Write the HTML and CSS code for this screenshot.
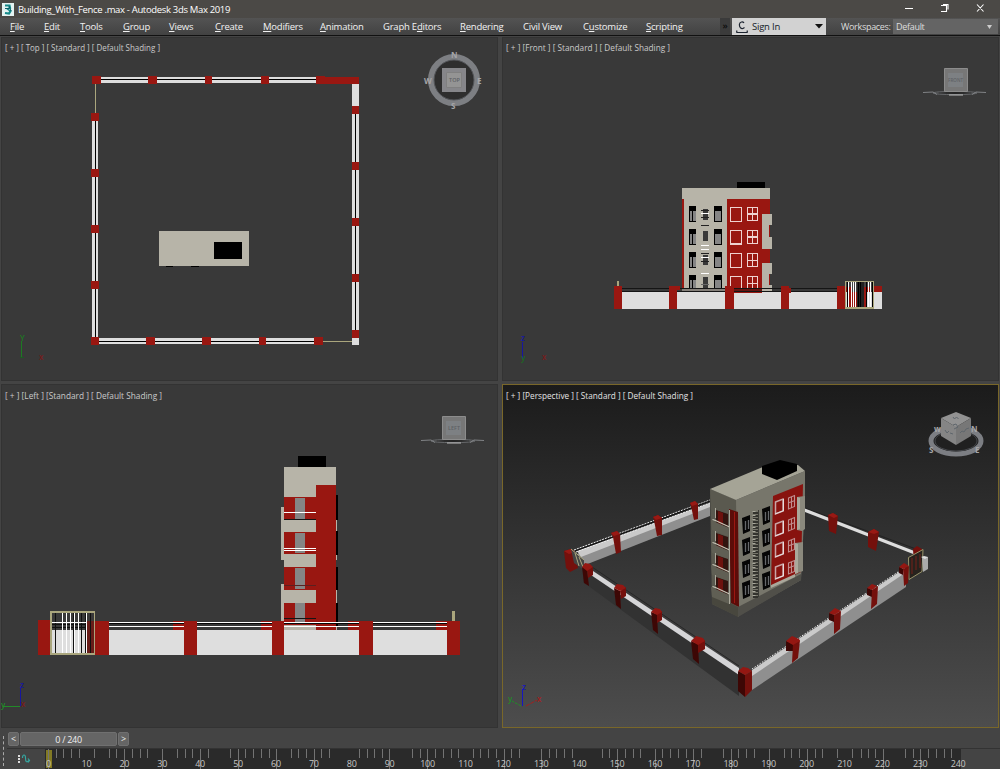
FILE: index.html
```html
<!DOCTYPE html>
<html lang="en">
<head>
<meta charset="utf-8">
<title>Building_With_Fence .max - Autodesk 3ds Max 2019</title>
<link rel="stylesheet" href="styles.css">
</head>
<body>
<div class="app">
  <header class="titlebar">
    <svg class="logo" width="12" height="13" viewBox="0 0 12 13"><path fill="#e4f3f2" d="M0 0h12v13H0z"/><path d="M3 2.500L7.500 2.500 8 5 6 6 8.500 8 7 10.500 3 10" fill="none" stroke="#158a8a" stroke-width="2.200"/><path d="M3 5.500h4M7 3l2 5" stroke="#0a5f68"/></svg>
    <span class="title">Building_With_Fence .max - Autodesk 3ds Max 2019</span>
    <svg class="window-buttons" width="100" height="18" viewBox="900 0 100 18"><path d="M905 8.500h8M941 5.500h5.500v6H941M943 4.500h5v5M977 4.500l6.500 7M983.500 4.500L977 11.500" fill="none" stroke="#fff" stroke-width="1.100"/></svg>
  </header>
  <nav class="menubar">
    <span class="item file"><u>F</u>ile</span><span class="item edit"><u>E</u>dit</span><span class="item tools"><u>T</u>ools</span><span class="item group"><u>G</u>roup</span><span class="item views"><u>V</u>iews</span><span class="item create"><u>C</u>reate</span><span class="item modifiers"><u>M</u>odifiers</span><span class="item animation"><u>A</u>nimation</span><span class="item graph">Graph E<u>d</u>itors</span><span class="item rendering"><u>R</u>endering</span><span class="item civil">Civil View</span><span class="item customize">C<u>u</u>stomize</span><span class="item scripting"><u>S</u>cripting</span>
    <span class="more">»</span>
    <div class="signin">
      <svg width="12" height="14" viewBox="0 0 12 14"><path d="M8 3C7 1.500 4 1.500 3.500 4c-.5 3 1.500 5 3.500 4.500L8.500 7.500M.5 12.500h11M.5 12.500L1 10.500M11.500 12.500L11 10.500" fill="none" stroke="#1d2430" stroke-width="1.200"/></svg>
      <span>Sign In</span>
      <svg class="caret" width="8" height="5" viewBox="0 0 8 5"><path d="M0 0h8L4 4.500z" fill="#111"/></svg>
    </div>
    <span class="ws-label">Workspaces:</span>
    <div class="ws-select"><span>Default</span><svg width="5" height="4" viewBox="0 0 5 4"><path d="M0 0h5L2.500 4z" fill="#ccc"/></svg></div>
  </nav>

  <main class="viewports">
    <section class="viewport">
      <svg class="scene" viewBox="1 37 497 344" width="497" height="344">
        <g shape-rendering="crispEdges">
          <path fill="#dedede" d="M98 77h220v6H98zM352 84h7v261h-7zM92 117h6v226h-6zM96 338h224v6H96z"/>
          <path fill="#000" d="M98 79h220v1H98zM355 110h1v225h-1zM95 117h1v224h-1zM96 341h222v1H96z"/>
          <path fill="#aaa67d" d="M95 84h1v29h-1zM323 341h29v1h-29z"/>
          <path fill="#991711" d="M92 76h9v8h-9zM148 76h9v8h-9zM205 76h7v8h-7zM261 76h8v8h-8zM316 76h9v8h-9zM325 77h34v7h-34zM352 106h7v8h-7zM352 162h7v8h-7zM352 218h7v8h-7zM352 274h7v8h-7zM352 330h7v8h-7zM91 113h8v8h-8zM91 169h8v8h-8zM91 225h8v8h-8zM91 281h8v8h-8zM91 337h8v8h-8zM146 337h9v8h-9zM202 337h9v8h-9zM259 337h7v8h-7zM314 337h9v8h-9z"/>
          <path fill="#b7b4a8" d="M159 231h90v35h-90z"/>
          <path fill="#000" d="M214 242h28v17h-28zM166 266h7v1h-7zM191 266h8v1h-8z"/>
        </g>
        <text class="vlabel" x="5" y="51" textLength="155" lengthAdjust="spacingAndGlyphs">[ + ] [ Top ] [ Standard ] [ Default Shading ]</text>
        <circle cx="454" cy="80" r="23" fill="#2e2e2e" stroke="#7d7f83" stroke-width="6"/>
        <circle cx="454" cy="80" r="20" fill="none" stroke="#55575b"/>
        <path fill="#86868a" d="M442 68h24v24h-24z"/><path fill="#949494" stroke="#808080" d="M446.500 72.500h15v15h-15z"/>
        <text class="cube" x="449" y="82" textLength="11">TOP</text>
        <g class="compass"><text x="451" y="58">N</text><text x="424" y="84">W</text><text x="477" y="84">E</text><text x="451" y="109">S</text></g>
        <path d="M21.500 358v-17" stroke="#1c7a22"/><text x="20" y="341" class="axis" fill="#1c7a22">Y</text><path d="M20 357.500h4" stroke="#1c5a22"/><text x="39" y="360" class="axis" fill="#7a1c1c">x</text>
      </svg>
    </section>

    <section class="viewport">
      <svg class="scene" viewBox="502 37 497 344" width="497" height="344">
        <g shape-rendering="crispEdges">
          <path fill="#000" d="M737 182h28v6h-28z"/>
          <path fill="#b7b4a8" d="M682 188h88v11h-88zM684 199h43v93h-43z"/>
          <path fill="#991711" d="M682 199h2v92h-2zM727 199h43v94h-43z"/>
          <path fill="#b7b4a8" d="M762 214h10v11h-3v12h3v12h-10zM762 263h10v11h-3v11h3v8h-10z"/>
          <g id="floor">
            <path fill="#000" d="M689 206h7v16h-7zM714 206h8v16h-8z"/>
            <path fill="#858585" d="M690 211h2v10h-2zM693 211h3v10h-3zM715 211h6v10h-6z"/>
            <path fill="none" stroke="#efd2d0" d="M730.500 207.500h11v14h-11zM747.500 207.500h10v13h-10zM752.500 207v14M747 214.500h11"/>
          </g>
          <use href="#floor" y="23"/><use href="#floor" y="46"/><use href="#floor" y="69"/>
          <path stroke="#efd2d0" d="M747 213.500h11M747 236.500h11M730 243.500h12"/>
          <path fill="#393939" d="M703 209h5v11h-5zM703 231h5v10h-5zM703 255h5v10h-5zM703 277h5v11h-5z"/>
          <path stroke="#222" d="M701 210.500h8M701 217.500h8M701 225.500h8M701 253.500h8M701 261.500h8"/>
          <path stroke="#fff" d="M701 213.500h8M701 245.500h8M701 249.500h8M701 257.500h8M701 273.500h8"/>
          <path stroke="#666" d="M701 284.500h8"/>
          <path fill="#393939" d="M622 289h57v2h-57zM772 289h65v2h-65z"/>
          <path fill="#85807a" d="M682 289h43v2h-43z"/><path fill="#641510" d="M734 289h28v2h-28z"/>
          <path fill="#dedede" d="M622 292h260v17H622z"/>
          <path stroke="#151515" d="M622 288.500h215M622 291.500h215"/>
          <path fill="#991711" d="M614 286h8v23h-8zM669 286h8v23h-8zM677 286h3v4h-3zM725 286h9v23h-9zM781 286h8v23h-8zM789 288h2v5h-2zM837 286h8v23h-8zM874 286h8v6h-8zM734 292h28v1h-28z"/>
          <path fill="#aaa67d" d="M617 281h2v5h-2z"/>
          <path fill="#444" d="M846 282h28v10h-28z"/><path fill="#991711" d="M846 287h5v5h-5zM864 287h7v5h-7zM847 292h20v15h-20z"/><path fill="#222" d="M857 282h7v25h-7z"/>
          <path stroke="#fff" d="M848.500 282v25M851.500 282v25M853.500 282v25M855.500 282v25M868.500 282v25M870.500 282v25"/>
          <path stroke="#000" d="M847.500 282v25M858.500 282v25M860.500 282v25M866.500 282v25M872.500 282v25"/>
          <path fill="none" stroke="#aaa67d" d="M845.500 281.500h28v27h-28zM846 307.500h27"/>
        </g>
        <text class="vlabel" x="506" y="51" textLength="164" lengthAdjust="spacingAndGlyphs">[ + ] [Front ] [ Standard ] [ Default Shading ]</text>
        <g id="sidecube"><ellipse cx="955" cy="93" rx="22" ry="1.500" fill="#242424" stroke="#707275"/><path d="M923 92.500l10-.5 4 2.500M986 92.500l-10-.5-4 2.500" fill="none" stroke="#808285"/><path d="M949 95h14" stroke="#bbb"/><path fill="#777" stroke="#8c8c8c" d="M944.500 68.500h23v23h-23z"/><path fill="#7d8083" d="M948 73h15v14h-15z"/></g>
        <text class="cube" x="948" y="82" textLength="15" lengthAdjust="spacingAndGlyphs">FRONT</text>
        <path d="M522.500 359v-17" stroke="#1616a0"/><text x="521" y="341" class="axis" fill="#1616a0">z</text><text x="521" y="361" class="axis" fill="#1c6a22">y</text><text x="542" y="360" class="axis" fill="#7a1c1c">x</text>
      </svg>
    </section>

    <section class="viewport">
      <svg class="scene" viewBox="1 384 497 344" width="497" height="344">
        <g shape-rendering="crispEdges">
          <path fill="#000" d="M298 456h28v11h-28z"/>
          <path fill="#b7b4a8" d="M284 467h52v30h-52zM281 507h3v53h-3zM281 584h3v38h-3zM336 520h1v11h-1zM336 555h1v5h-1zM336 590h1v13h-1zM336 626h1v4h-1z"/>
          <path fill="#991711" d="M316 485h20v145h-20zM284 497h32v128h-32z"/>
          <path fill="#858585" d="M295 498h10v21h-10zM295 533h10v20h-10zM295 568h10v21h-10zM295 603h10v19h-10z"/>
          <path fill="#b7b4a8" d="M284 520h32v12h-32zM284 554h32v13h-32zM284 590h32v13h-32zM284 625h32v5h-32z"/>
          <path stroke="#fff" d="M284 512.500h32M284 548.500h32M284 550.500h32"/>
          <path stroke="#151515" d="M284 519.500h32M284 618.500h32"/><path stroke="#5b2020" d="M284 585.500h32"/>
          <path fill="#000" d="M336 495h2v25h-2zM336 531h2v24h-2zM336 567h2v23h-2zM336 603h2v23h-2z"/>
          <path fill="#dedede" d="M52 630h400v25H52z"/>
          <path fill="#991711" d="M38 620h12v35H38zM95 621h14v34H95zM184 621h13v34h-13zM272 621h12v34h-12zM359 621h14v34h-14zM447 621h13v34h-13zM173 621h11v9h-11zM261 621h11v9h-11zM348 621h11v9h-11zM436 621h11v9h-11z"/>
          <path stroke="#fff" d="M109 622.500h75M197 622.500h75M284 622.500h75M373 622.500h74M109 626.500h75M197 626.500h75M284 626.500h75M373 626.500h74"/>
          <path stroke="#080808" d="M109 623.500h75M197 623.500h75M284 623.500h75M373 623.500h74"/>
          <path fill="#aaa67d" d="M452 611h3v10h-3z"/>
          <path fill="#681d19" d="M87 621h8v33h-8z"/>
          <path stroke="#111" d="M52 624.500h34M52 627.500h34M55.500 613v40M73.500 613v41M81.500 613v40M85.500 613v40M90.500 613v40"/>
          <path stroke="#fff" d="M52 622.500h34M62.500 613v41M66.500 613v41M70.500 613v41M74.500 613v41M78.500 613v41M86.500 613v41"/>
          <path fill="#aaa67d" fill-rule="evenodd" d="M50 611h45v44H50zM52 613v40h42v-40z"/>
        </g>
        <text class="vlabel" x="5" y="399" textLength="157" lengthAdjust="spacingAndGlyphs">[ + ] [Left ] [Standard ] [ Default Shading ]</text>
        <use href="#sidecube" x="-502" y="348"/>
        <text class="cube" x="448" y="430" textLength="12">LEFT</text>
        <path d="M20.500 706v-18" stroke="#1616a0"/><path d="M3 706.500h17" stroke="#228a28"/><text x="20" y="688" class="axis" fill="#1616a0">z</text><text x="1" y="708" class="axis" fill="#228a28">y</text><text x="21" y="707" class="axis" fill="#7a1c1c">x</text>
      </svg>
    </section>

    <section class="viewport active">
      <svg class="scene" viewBox="502 384 497 344" width="497" height="344">
        <!-- rear fence -->
        <path fill="#8f8f8f" d="M577 554l133-50v12l-125 49z"/><path fill="#cacaca" d="M577 551l133-48v4l-129 50z"/>
        <path d="M574 550l136-50M576 552l134-49" stroke="#eee" stroke-dasharray="2 1"/><path d="M575 551l135-50" stroke="#111"/>
        <path d="M802 507l114 42" stroke="#222"/><path d="M803 509.500l112 43.500" stroke="#ddd" stroke-width="3.200"/>
        <!-- rear posts -->
        <path fill="#74100c" d="M611 533l6-2 3 3 1 18-5 2-3-17zM653 517l5-2 4 3v17l-5 1-3-16zM690 503l5-2 3 3v15l-4 1-3-14zM828 515l5-2 5 3-2 18-7-3zM868 532l6-3 5 3-3 19-8-4zM913 549l4-3 5 3-2 20-6-4zM564 551l7-2 4 3 3 16-8 4-4-4z"/>
        <path fill="#991914" d="M611 533l6-2 3 3-6 2zM653 517l5-2 4 3-6 2zM690 503l5-2 3 3-6 2zM828 515l5-2 5 3-4 2zM868 532l6-3 5 3-5 2zM564 551l7-2 4 3-6 2z"/>
        <!-- building -->
        <path fill="#5a594f" d="M710 489l27 11 2 117-27-13z"/><path fill="#77766b" d="M736 500l69-29v29l-4 80-63 36z"/>
        <path fill="#a5a496" d="M710 489l55-23 33-1 7 6-69 29z"/>
        <path fill="#000" d="M762 466l18-6 17 4v7l-20 9-15-6z"/>
        <path fill="#88130f" d="M773 496l30-12-2 88-30 14z"/><path fill="#5c0c09" d="M729 509l9 3 1 95-8-4z"/><path stroke="#9c1711" d="M734.500 512v91"/>
        <path fill="#48473e" d="M712 594l26 13v10l-26-13z"/><path fill="#504f49" d="M738 607l63-33v6l-63 37z"/>
        <g id="balcony"><path fill="#32140f" d="M716 510l12 4v14l-12-5z"/><path fill="#6d120e" d="M718 511l5 2v12l-5-2z"/><path fill="#605f54" d="M711 520l18 8v9l-17-7z"/><path d="M712.500 519.500l3 1 14 6.500" fill="none" stroke="#c8c6b8" stroke-width="1.300"/></g>
        <use href="#balcony" y="23"/><use href="#balcony" y="45"/><use href="#balcony" y="67"/>
        <path d="M729.500 510v94M715.500 508v10M715.500 531v10M715.500 553v10M715.500 575v10" stroke="#aaa89b"/>
        <g id="persp-window"><path fill="#050505" d="M742 518l8-3v16l-7 3z"/><path d="M745.500 521v9M748.500 520v9" stroke="#66686b" stroke-width="1.300"/></g>
        <use href="#persp-window" y="22"/><use href="#persp-window" y="44"/><use href="#persp-window" y="65"/><use href="#persp-window" x="20" y="-9"/><use href="#persp-window" x="20" y="13"/><use href="#persp-window" x="20" y="35"/><use href="#persp-window" x="20" y="56"/>
        <path d="M755.500 512v86" stroke="#33332e" stroke-width="5" stroke-dasharray="2 1"/><path d="M754 511v87" stroke="#aaa99d" stroke-width="3" stroke-dasharray="1 3"/><path d="M758.500 510v87" stroke="#3a3a35"/>
        <g id="persp-red"><path d="M775.500 502l7.500-3v12l-7.500 3z" fill="none" stroke="#c9a5a6" stroke-width="1.500"/><path d="M788.500 498l6-2.500v11l-6 2.500zM791.500 497v11M788 503l7-2.500" fill="none" stroke="#c08d8e" stroke-width="1.100"/><path d="M775 514l9-3.500M783.500 499v12" stroke="#e8dcdc"/></g>
        <use href="#persp-red" y="22"/><use href="#persp-red" y="43"/><use href="#persp-red" y="65"/>
        <path fill="#8b897d" d="M797 497l8-1v33l-3 2-5-1zM795 543l8-1v29l-8 3z"/><path fill="#aaa89b" d="M797 497l3 1v31l-3 1zM795 543l3 1v29l-3 1zM771 585l24-11v3l-24 11z"/>
        <!-- front left fence -->
        <path fill="#323232" d="M583 568l156 104v24L583 582z"/><path fill="#d5d5d7" d="M590 569l149 99v7L588 573z"/><path d="M592 567l147 99" stroke="#262626"/>
        <!-- front right fence -->
        <path fill="#8f8f8f" d="M752 671l154-101v17L752 690z"/><path fill="#cacaca" d="M752 670l153-102v5L752 676z"/><path d="M752 669l152-101" stroke="#eee" stroke-dasharray="1.500 1.500"/>
        <!-- gates -->
        <path d="M571 549l13 11v10l-10-7z" fill="#444"/><path d="M575 553l4 13M579 557l4 10M571 549l13 11" stroke="#aaa67d"/><path fill="#27221d" stroke="#99946a" d="M908.500 557.500l14.500-8-1 22-13 8z"/><path stroke="#77211b" d="M912 558v16M916 556v14M920 554v14"/><path fill="#aaa" d="M922 557h6v12l-5 3z"/><path fill="#ddd" d="M921 557l3-1 4 1-3 2z"/>
        <!-- front posts -->
        <path fill="#3d0705" d="M582 567l5 3 2 16-5-3zM614 588l6 3 1 18-5-4zM651 612l6 2 1 20-5-4zM691 641l7 3 1 20-6-5zM738 671l7 4v22l-7-6zM786 641l7 3v7h-7zM829 613l5 2v7l-5-2zM867 588l5 2v7l-5-2zM899 567l4 2v6l-4-2z"/>
        <path fill="#74100c" d="M587 570l6-3v8l-5 3zM620 591l6-4v9l-5 3zM657 614l5-3v9l-5 3zM698 644l7-4v9l-7 4zM745 675l7-4v19l-7 7zM793 644l7-4-2 18-6 5zM834 615l7-4-1 18-6 5zM872 590l6-4-1 18-6 5zM903 569l6-3-1 17-4 3z"/>
        <path fill="#941712" d="M582 567l3-4 5 1 3 3-6 4zM614 588l3-4 6 1 3 3-6 3zM651 612l4-4 5 1 2 3-5 3zM691 641l5-5 7 2 2 3-7 4zM738 671l5-4 5 1 4 3-7 4zM786 641l6-5 7 3 1 2-7 4zM829 613l6-5 6 3-7 4zM867 588l5-4 5 2-5 4zM899 567l5-4 5 3-6 3z"/>
        <text class="vlabel bright" x="506" y="399" textLength="187" lengthAdjust="spacingAndGlyphs">[ + ] [Perspective ] [ Standard ] [ Default Shading ]</text>
        <ellipse cx="956" cy="441" rx="25" ry="13" fill="#202020" stroke="#7c7e83" stroke-width="5"/>
        <ellipse cx="956" cy="441" rx="21" ry="10" fill="none" stroke="#45474b"/>
        <path fill="#929292" d="M941 418l15-6 15 6-15 9z"/><path fill="#858585" d="M941 418l15 9v18l-15-9z"/><path fill="#777" d="M956 427l15-9v18l-15 9z"/>
        <path d="M953 417l1.500 2 2-2 2 2M945 430l2 3 2-2M950 433l3 1M960 433l2-2 2 1 2-3 3-1M953 425l3-1 2 3-4 2" stroke="#5f666c" fill="none"/><g class="compass"><text x="929" y="453">S</text><text x="975" y="453">E</text><text x="934" y="432">w</text><text x="971" y="432">N</text></g>
        <path d="M522.500 706v-17" stroke="#1616c0"/><path d="M521 706l-9-5" stroke="#228a28" stroke-dasharray="3 1"/><path d="M526 706l11-6" stroke="#a31e1e" stroke-dasharray="4 1"/><text x="522" y="690" class="axis" fill="#1616c0">z</text><text x="508" y="702" class="axis" fill="#228a28">y</text><text x="537" y="702" class="axis" fill="#a31e1e">x</text>
      </svg>
    </section>
  </main>

  <footer class="timeline">
    <div class="grip"></div>
    <div class="rows">
      <div class="slider"><span class="arrow">&lt;</span><span class="frame">0 / 240</span><span class="arrow">&gt;</span></div>
      <div class="track">
        <svg class="curve" width="38" height="20" viewBox="7 749 38 20"><path d="M19 755v8" stroke="#ddd" stroke-width="2" stroke-dasharray="2 1"/><path d="M22.500 758c0-4 3-4 3 0s1 5 4 2M28 758.500l1.500 2-1.500 2" fill="none" stroke="#35a6a0" stroke-width="1.200"/></svg>
        <svg id="ruler" width="916" height="20" viewBox="45 749 916 20"><path fill="#827a24" d="M46 750h6v18h-6z"/></svg>
      </div>
    </div>
  </footer>
</div>
<script src="ruler.js"></script>
</body>
</html>
```
FILE: ruler.js
```js
const ruler = document.getElementById("ruler");
const NS = "http://www.w3.org/2000/svg";
const shortTicks = [56, 63, 71, 79, 94, 109, 116, 132, 140, 147, 177, 185, 192, 208, 230, 245, 253, 261, 269, 291, 298, 306, 321, 329, 359, 367, 374, 382, 412, 420, 435, 443, 451, 458, 473, 480, 488, 496,
  511, 519, 549, 556, 564, 572, 602, 609, 625, 633, 640, 662, 670, 678, 686, 701, 723, 738, 746, 754, 784, 791, 799, 815, 822, 837, 852, 861, 868, 875, 905, 913, 928, 936, 944, 951];
const longTicks = [48, 124, 162, 200, 238, 276, 314, 389, 427, 504, 541, 617, 655, 693, 731, 769, 807, 883, 920];

const path = document.createElementNS(NS, "path");
path.setAttribute("d", shortTicks.map(x => `M${x + 0.5} 749v9`).join("") + longTicks.map(x => `M${x + 0.5} 749v20`).join(""));
path.setAttribute("class", "ticks");
ruler.append(path);

for (let frame = 0; frame <= 240; frame += 10) {
  const label = document.createElementNS(NS, "text");
  label.setAttribute("x", 48.5 + frame * 3.79);
  label.setAttribute("y", 767);
  label.setAttribute("class", "tick-label");
  label.textContent = frame;
  ruler.append(label);
}
```
FILE: styles.css
```css
* { box-sizing: border-box; }
body { margin: 0; background: #444; font-family: "Open Sans", "Noto Sans", sans-serif; color: #eee; overflow: hidden; }
svg { display: block; flex: none; }
.app { width: 1000px; height: 769px; display: flex; flex-direction: column; }

.titlebar { height: 18px; flex: none; display: flex; align-items: center; background: #4b4946; padding-left: 2px; }
.title { margin-left: 4px; font-size: 9.5px; letter-spacing: -0.33px; white-space: nowrap; color: #fff; }
.window-buttons { margin-left: auto; }

.menubar { height: 18px; flex: none; display: flex; align-items: center; padding-left: 10px; background: linear-gradient(#535353, #424242); border-bottom: 1px solid #111; font-size: 9.5px; letter-spacing: -0.22px; color: #f2f2f2; white-space: nowrap; }
.item { flex: none; }
.item u { text-underline-offset: 1px; }
.file { width: 34px; }
.edit { width: 36px; }
.tools { width: 43px; }
.group { width: 46px; }
.views { width: 46px; }
.create { width: 48px; }
.modifiers { width: 57px; }
.animation { width: 63px; }
.graph { width: 77px; }
.rendering { width: 63px; }
.civil { width: 60px; }
.customize { width: 63px; }
.scripting { width: 74px; }
.more { width: 10px; margin-right: 2px; height: 17px; line-height: 15px; background: #3b3b3b; color: #0c0c0c; font-weight: 600; text-align: center; }
.signin { width: 94px; height: 17px; display: flex; align-items: center; background: #d2d2d2; color: #141c28; padding: 0 3px 0 4px; }
.signin span { margin-left: 4px; }
.caret { margin-left: auto; }
.ws-label { margin-left: 15px; width: 52px; font-size: 9px; letter-spacing: -0.3px; color: #ddd; }
.ws-select { width: 105px; height: 15px; display: flex; align-items: center; justify-content: space-between; padding: 0 6px 0 3px; background: #646464; color: #ddd; font-size: 9px; letter-spacing: -0.3px; }

.viewports { height: 692px; flex: none; display: grid; grid-template-columns: 497px 497px; grid-template-rows: 344px 344px; column-gap: 4px; row-gap: 3px; padding: 1px 1px 0; background: #444; }
.viewport { background: #393939; box-shadow: inset 0 0 0 1px #333; }
.viewport.active { background: linear-gradient(#1b1b1b, #4d4d4d); outline: 1px solid #796729; outline-offset: -1px; box-shadow: none; }
.vlabel { font-size: 9px; fill: #cacaca; white-space: pre; }
.bright { fill: #e4e4e4; }
.cube { font-size: 5.5px; font-weight: 600; fill: #5d6165; }
.compass { font-size: 8px; font-weight: 700; fill: #a5a5a7; }
.axis { font-size: 8px; font-weight: 600; }

.timeline { flex: 1; display: flex; background: #444; }
.grip { width: 1px; margin: 8px 3px 3px; border-left: 1px dashed #aaa; }
.rows { flex: 1; display: flex; flex-direction: column; }
.slider { height: 20px; display: flex; align-items: center; gap: 1px; padding: 2px 0 0 1px; }
.arrow, .frame { height: 14px; line-height: 13px; text-align: center; font-size: 9px; background: #656565; border: 1px solid #707070; border-radius: 2px; color: #eee; }
.arrow { width: 11px; line-height: 12px; }
.frame { width: 97px; letter-spacing: -0.3px; }
.track { height: 21px; display: flex; border-top: 1px solid #333; }
#ruler { background: #2a2a2a; overflow: visible; }
.ticks { fill: none; stroke: #737373; }
.tick-label { font-size: 9px; letter-spacing: -0.3px; fill: #c6c6c6; text-anchor: middle; }
```
